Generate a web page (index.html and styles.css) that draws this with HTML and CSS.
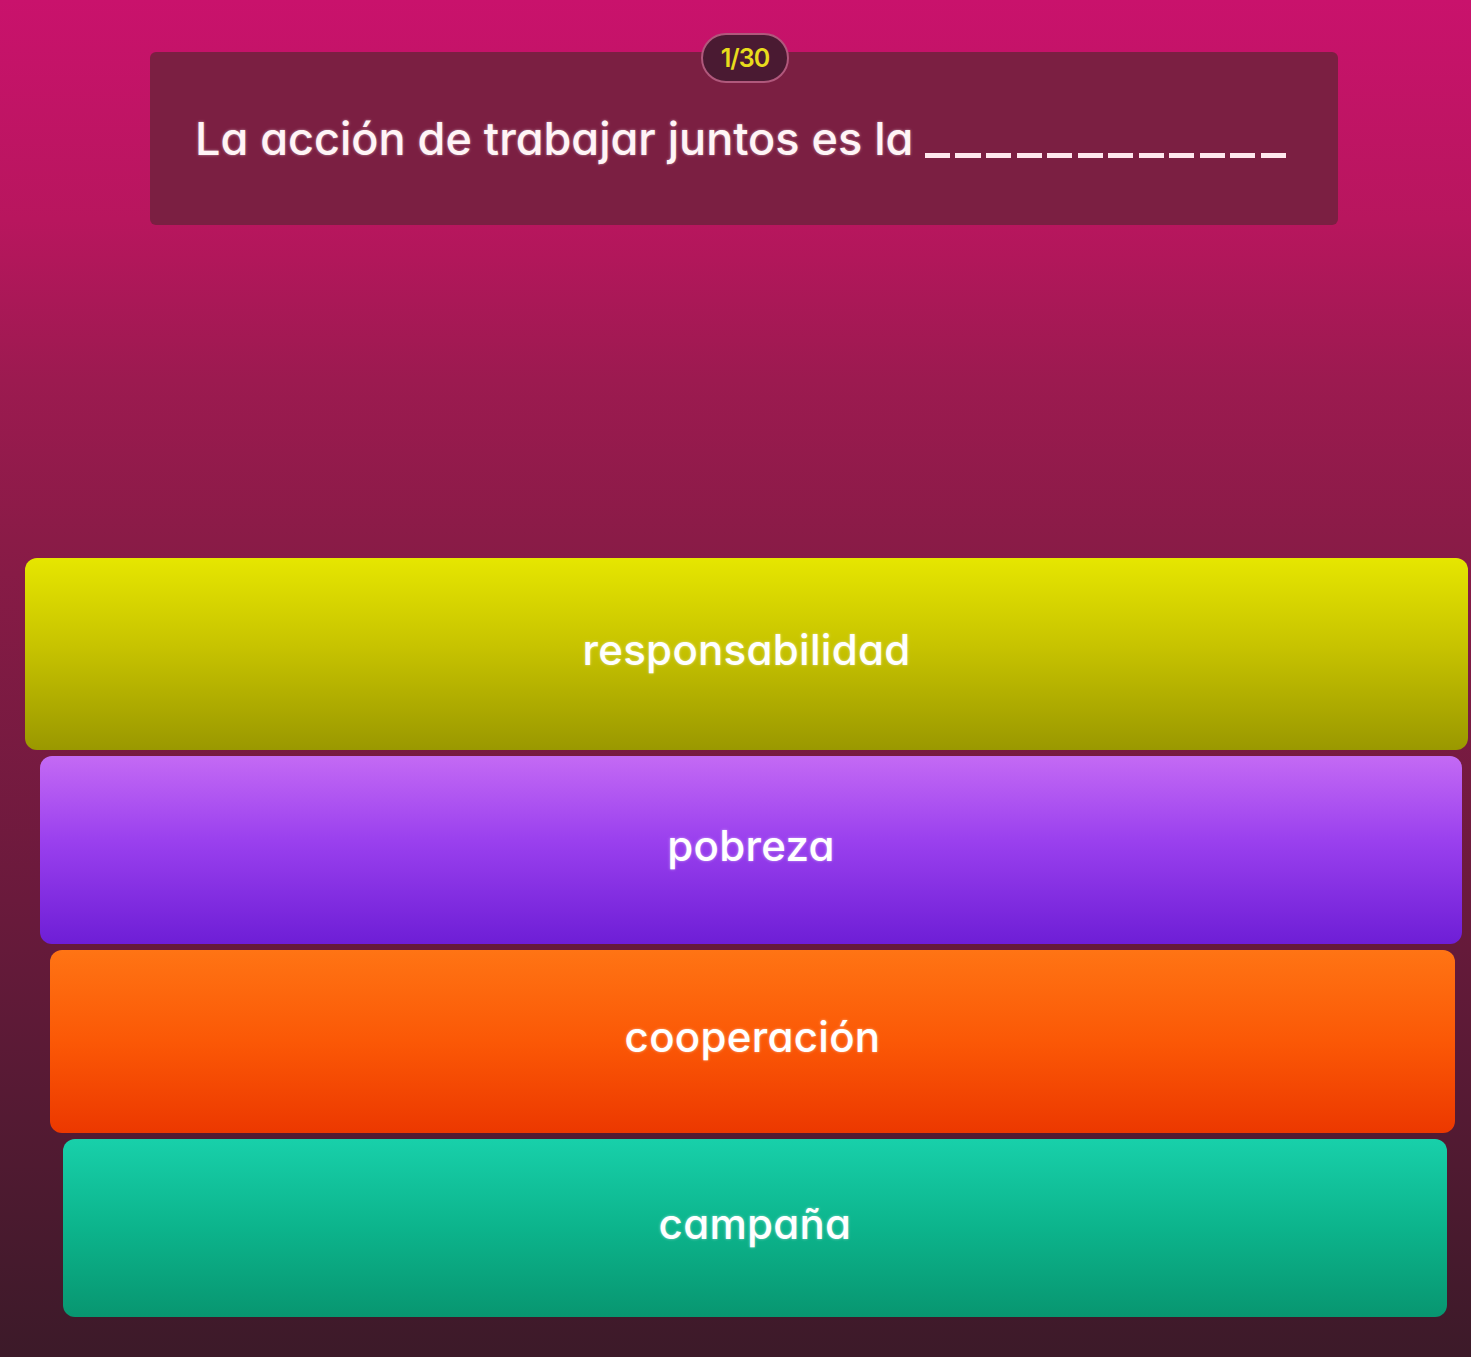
FILE: index.html
```html
<!DOCTYPE html>
<html lang="es">
<head>
<meta charset="utf-8">
<title>Quiz</title>
<link rel="stylesheet" href="styles.css">
</head>
<body>
<div class="screen">
  <div class="question-wrap">
    <div class="badge">1/30</div>
    <div class="question">
      <span class="qtext">La acción de trabajar juntos es la</span>
      <span class="blank"></span>
    </div>
  </div>
  <div class="options">
    <div class="option opt-yellow">responsabilidad</div>
    <div class="option opt-purple">pobreza</div>
    <div class="option opt-orange">cooperación</div>
    <div class="option opt-teal">campaña</div>
  </div>
</div>
</body>
</html>
```

FILE: styles.css
```css
html, body {
  margin: 0;
  padding: 0;
}
body {
  width: 1471px;
  height: 1357px;
  overflow: hidden;
  font-family: Inter, "Open Sans", sans-serif;
  font-feature-settings: "cv11" 1;
  background: linear-gradient(180deg, #c9126c 0px, #b8165e 220px, #9c1a50 380px, #8a1b47 540px, #6a1a3c 900px, #3c1a29 1357px);
}
.screen {
  display: flex;
  flex-direction: column;
  height: 1357px;
}
.question-wrap {
  position: relative;
  padding-top: 52px;
  margin-left: 150px;
  width: 1188px;
}
.badge {
  position: absolute;
  top: 33px;
  left: 551px;
  width: 88px;
  height: 50px;
  box-sizing: border-box;
  border-radius: 25px;
  background: #4a1a32;
  border: 2px solid #b0587c;
  color: #e8dc1c;
  font-size: 25px;
  font-weight: 600;
  display: flex;
  align-items: center;
  justify-content: center;
  letter-spacing: -1px;
  z-index: 2;
}
.question {
  height: 173px;
  background: #7b1f42;
  border-radius: 6px;
  display: flex;
  align-items: center;
  padding-left: 45px;
  box-sizing: border-box;
  padding-top: 0;
}
.qtext {
  color: #fff4f6;
  font-size: 45px;
  font-weight: 500;
  letter-spacing: 0;
  text-shadow: 0 0 3px rgba(255,255,255,0.5);
}
.blank {
  display: inline-block;
  width: 366px;
  height: 5px;
  margin-left: 12px;
  margin-top: 34px;
  background: repeating-linear-gradient(90deg, #ffe8ee 0 25px, transparent 25px 30.5px);
}
.options {
  margin-top: 333px;
  display: flex;
  flex-direction: column;
  gap: 6px;
}
.option {
  border-radius: 12px;
  display: flex;
  align-items: center;
  justify-content: center;
  color: #ffffff;
  font-size: 42px;
  font-weight: 500;
  letter-spacing: 0.3px;
  padding-bottom: 10px;
  box-sizing: border-box;
  text-shadow: 0 0 3px rgba(255,255,255,0.5);
}
.opt-yellow {
  margin-left: 25px;
  margin-right: 3px;
  height: 192px;
  background: linear-gradient(180deg, #e6e600 0%, #c8c400 45%, #9a9800 100%);
}
.opt-purple {
  margin-left: 40px;
  margin-right: 9px;
  height: 188px;
  background: linear-gradient(180deg, #c46af4 0%, #9a40ee 45%, #6e1ed6 100%);
}
.opt-orange {
  margin-left: 50px;
  margin-right: 16px;
  height: 183px;
  background: linear-gradient(180deg, #ff7414 0%, #fb5806 50%, #ec3800 100%);
}
.opt-teal {
  margin-left: 63px;
  margin-right: 24px;
  height: 178px;
  background: linear-gradient(180deg, #18d0aa 0%, #0cb48c 50%, #089670 100%);
}
```
